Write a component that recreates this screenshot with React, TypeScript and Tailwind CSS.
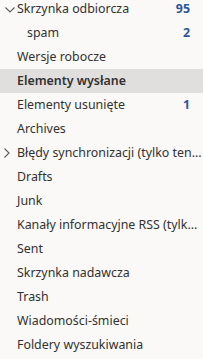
interface Folder {
  name: string
  count?: number
  indent?: number
  chevron?: 'down' | 'right'
  selected?: boolean
}

const FOLDERS: Folder[] = [
  { name: 'Skrzynka odbiorcza', count: 95, chevron: 'down' },
  { name: 'spam', count: 2, indent: 1 },
  { name: 'Wersje robocze' },
  { name: 'Elementy wysłane', selected: true },
  { name: 'Elementy usunięte', count: 1 },
  { name: 'Archives' },
  { name: 'Błędy synchronizacji (tylko ten...', chevron: 'right' },
  { name: 'Drafts' },
  { name: 'Junk' },
  { name: 'Kanały informacyjne RSS (tylk...' },
  { name: 'Sent' },
  { name: 'Skrzynka nadawcza' },
  { name: 'Trash' },
  { name: 'Wiadomości-śmieci' },
  { name: 'Foldery wyszukiwania' },
]

export default function App() {
  return (
    <div
      className="w-[203px] h-[359px] overflow-hidden bg-[#faf9f8] text-[#323130]"
      style={{ fontFamily: '"Noto Sans", "Open Sans", sans-serif' }}
    >
      <ul className="-mt-[3px]">
        {FOLDERS.map(f => (
          <li
            key={f.name}
            className={`relative flex items-center h-6 pr-[13px] text-[12.4px] ${
              f.selected ? 'bg-[#e1dfdd] font-semibold' : ''
            }`}
          >
            {f.chevron === 'down' && (
              <svg width="10" height="6" viewBox="0 0 10 6" className="absolute left-[5px] top-[10px]">
                <path d="M0.5 0.5 L5 5 L9.5 0.5" fill="none" stroke="#605e5c" strokeWidth="1.1" />
              </svg>
            )}
            {f.chevron === 'right' && (
              <svg width="6" height="10" viewBox="0 0 6 10" className="absolute left-[4px] top-[7px]">
                <path d="M0.5 0.5 L5 5 L0.5 9.5" fill="none" stroke="#605e5c" strokeWidth="1.1" />
              </svg>
            )}
            <span className={`flex-1 min-w-0 whitespace-nowrap ${f.indent ? 'pl-[27px]' : 'pl-[17px]'}`}>
              {f.name}
            </span>
            {f.count !== undefined && (
              <span className="ml-2 font-bold text-[#2b579a]">{f.count}</span>
            )}
          </li>
        ))}
      </ul>
    </div>
  )
}
